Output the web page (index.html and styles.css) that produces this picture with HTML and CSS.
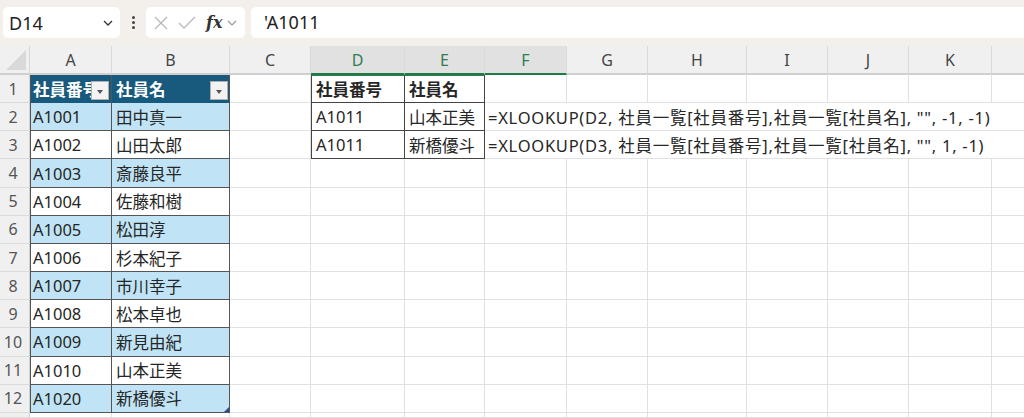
FILE: index.html
```html
<!DOCTYPE html>
<html lang="ja">
<head>
<meta charset="utf-8">
<link rel="stylesheet" href="styles.css">
</head>
<body>
<div class="topbar">
  <div class="namebox">
    <span class="nb-text">D14</span>
    <svg class="chev" width="10" height="6" viewBox="0 0 10 6"><path d="M1 1 L5 5 L9 1" fill="none" stroke="#333" stroke-width="1.3"/></svg>
  </div>
  <div class="dots"><span></span><span></span><span></span></div>
  <div class="fxbox">
    <svg width="16" height="16" viewBox="0 0 16 16"><path d="M2 2 L14 14 M14 2 L2 14" stroke="#b8b8b8" stroke-width="1.3" fill="none"/></svg>
    <svg width="18" height="14" viewBox="0 0 18 14"><path d="M1 7 L6 12 L17 1" stroke="#b8b8b8" stroke-width="1.3" fill="none"/></svg>
    <span class="fx">fx</span>
    <svg width="10" height="6" viewBox="0 0 10 6"><path d="M1 1 L5 5 L9 1" fill="none" stroke="#999" stroke-width="1.2"/></svg>
  </div>
  <div class="formula">'A1011</div>
</div>
<div class="sheet">
  <div class="corner"><div class="tri"></div></div>
  <div class="ch">A</div><div class="ch">B</div><div class="ch">C</div>
  <div class="ch sel">D</div><div class="ch sel">E</div><div class="ch sel">F</div>
  <div class="ch">G</div><div class="ch">H</div><div class="ch">I</div><div class="ch">J</div><div class="ch">K</div><div class="ch last"></div>

  <div class="rh">1</div>
  <div class="c ta th">社員番号<span class="flt"></span></div>
  <div class="c tb th">社員名<span class="flt"></span></div>
  <div class="c"></div>
  <div class="c dd dtop b">社員番号</div>
  <div class="c de dtop b">社員名</div>
  <div class="c"></div><div class="c"></div><div class="c"></div><div class="c"></div><div class="c"></div><div class="c"></div><div class="c last"></div>

  <div class="rh">2</div>
  <div class="c ta band">A1001</div>
  <div class="c tb band">田中真一</div>
  <div class="c"></div>
  <div class="c dd">A1011</div>
  <div class="c de">山本正美</div>
  <div class="c span">=XLOOKUP(D2, 社員一覧[社員番号],社員一覧[社員名], "", -1, -1)</div>
  <div class="c last"></div>

  <div class="rh">3</div>
  <div class="c ta">A1002</div>
  <div class="c tb">山田太郎</div>
  <div class="c"></div>
  <div class="c dd">A1011</div>
  <div class="c de">新橋優斗</div>
  <div class="c span">=XLOOKUP(D3, 社員一覧[社員番号],社員一覧[社員名], "", 1, -1)</div>
  <div class="c last"></div>

  <div class="rh">4</div><div class="c ta band">A1003</div><div class="c tb band">斎藤良平</div>
  <div class="c"></div><div class="c"></div><div class="c"></div><div class="c"></div><div class="c"></div><div class="c"></div><div class="c"></div><div class="c"></div><div class="c"></div><div class="c last"></div>
  <div class="rh">5</div><div class="c ta">A1004</div><div class="c tb">佐藤和樹</div>
  <div class="c"></div><div class="c"></div><div class="c"></div><div class="c"></div><div class="c"></div><div class="c"></div><div class="c"></div><div class="c"></div><div class="c"></div><div class="c last"></div>
  <div class="rh">6</div><div class="c ta band">A1005</div><div class="c tb band">松田淳</div>
  <div class="c"></div><div class="c"></div><div class="c"></div><div class="c"></div><div class="c"></div><div class="c"></div><div class="c"></div><div class="c"></div><div class="c"></div><div class="c last"></div>
  <div class="rh">7</div><div class="c ta">A1006</div><div class="c tb">杉本紀子</div>
  <div class="c"></div><div class="c"></div><div class="c"></div><div class="c"></div><div class="c"></div><div class="c"></div><div class="c"></div><div class="c"></div><div class="c"></div><div class="c last"></div>
  <div class="rh">8</div><div class="c ta band">A1007</div><div class="c tb band">市川幸子</div>
  <div class="c"></div><div class="c"></div><div class="c"></div><div class="c"></div><div class="c"></div><div class="c"></div><div class="c"></div><div class="c"></div><div class="c"></div><div class="c last"></div>
  <div class="rh">9</div><div class="c ta">A1008</div><div class="c tb">松本卓也</div>
  <div class="c"></div><div class="c"></div><div class="c"></div><div class="c"></div><div class="c"></div><div class="c"></div><div class="c"></div><div class="c"></div><div class="c"></div><div class="c last"></div>
  <div class="rh">10</div><div class="c ta band">A1009</div><div class="c tb band">新見由紀</div>
  <div class="c"></div><div class="c"></div><div class="c"></div><div class="c"></div><div class="c"></div><div class="c"></div><div class="c"></div><div class="c"></div><div class="c"></div><div class="c last"></div>
  <div class="rh">11</div><div class="c ta">A1010</div><div class="c tb">山本正美</div>
  <div class="c"></div><div class="c"></div><div class="c"></div><div class="c"></div><div class="c"></div><div class="c"></div><div class="c"></div><div class="c"></div><div class="c"></div><div class="c last"></div>
  <div class="rh">12</div><div class="c ta band">A1020</div><div class="c tb band tend">新橋優斗<span class="handle"></span></div>
  <div class="c"></div><div class="c"></div><div class="c"></div><div class="c"></div><div class="c"></div><div class="c"></div><div class="c"></div><div class="c"></div><div class="c"></div><div class="c last"></div>
  <div class="rh"></div><div class="c"></div><div class="c"></div>
  <div class="c"></div><div class="c"></div><div class="c"></div><div class="c"></div><div class="c"></div><div class="c"></div><div class="c"></div><div class="c"></div><div class="c"></div><div class="c last"></div>
</div>
</body>
</html>
```
FILE: styles.css
```css
* { box-sizing: border-box; }
html, body { margin: 0; padding: 0; }
body {
  width: 1024px;
  height: 418px;
  overflow: hidden;
  background: #ffffff;
  font-family: "Noto Sans", "Noto Sans CJK JP", sans-serif;
  color: #222;
}
.topbar {
  height: 46px;
  background: #f3f0ec;
  display: flex;
  align-items: flex-start;
  padding: 7px 0 0 3px;
  gap: 0;
}
.namebox {
  width: 117px;
  height: 31px;
  background: #fff;
  border-radius: 5px;
  display: flex;
  align-items: center;
  justify-content: space-between;
  padding: 0 7px 0 6px;
}
.nb-text { font-size: 18px; color: #222; }
.dots {
  width: 26px;
  height: 31px;
  display: flex;
  flex-direction: column;
  align-items: center;
  justify-content: center;
  gap: 2px;
}
.dots span { width: 3px; height: 3px; border-radius: 50%; background: #444; }
.fxbox {
  width: 99px;
  height: 31px;
  background: #fff;
  border-radius: 5px;
  display: flex;
  align-items: center;
  padding: 0 0 0 7px;
  gap: 10px;
}
.fxbox svg:nth-child(2) { margin-left: -1px; }
.fx {
  font-family: "DejaVu Serif", "Liberation Serif", serif;
  font-style: italic;
  font-weight: bold;
  font-size: 16px;
  color: #333;
  margin-right: -5px;
}
.formula {
  flex: 1;
  margin-left: 6px;
  height: 31px;
  background: #fff;
  border-radius: 5px 0 0 5px;
  padding-left: 13px;
  font-size: 18px;
  line-height: 31px;
  color: #222;
}
.sheet {
  display: grid;
  grid-template-columns: 30px 82px 118px 81px 94px 80px 82px 81px 99px 81px 81px 83px 1fr;
  grid-template-rows: 29px repeat(12, 28.17px) 1fr;
  height: 372px;
  font-size: 16px;
}
.corner {
  background: #f0f0f0;
  border-bottom: 2px solid #cfcfcf;
  border-right: 1px solid #d8d8d8;
  position: relative;
}
.tri {
  position: absolute;
  right: 3px;
  bottom: 3px;
  width: 0; height: 0;
  border-left: 20px solid transparent;
  border-bottom: 20px solid #d9d9d9;
}
.ch {
  background: #f0f0f0;
  border-right: 1px solid #dadada;
  border-bottom: 2px solid #cfcfcf;
  display: flex;
  align-items: center;
  justify-content: center;
  font-size: 16px;
  color: #444;
  padding-top: 1px;
}
.ch.sel { background: #e1e1e1; color: #2e7d52; border-bottom-color: #1f7a46; }
.ch.last { border-right: none; }
.rh {
  background: #f0f0f0;
  border-bottom: 1px solid #dadada;
  border-right: 1px solid #d0d0d0;
  display: flex;
  align-items: center;
  justify-content: center;
  font-size: 16px;
  color: #555;
  padding-right: 3px;
}
.c {
  border-right: 1px solid #e1e1e1;
  border-bottom: 1px solid #e1e1e1;
  display: flex;
  align-items: center;
  padding: 0 0 0 4px;
  white-space: nowrap;
  overflow: hidden;
  font-size: 16.5px;
  color: #262626;
  position: relative;
}
.c.last { border-right: none; }
.ta { border-left: 1px solid #555; border-right: 1px solid #555; border-bottom: 1px solid #555; padding-left: 2px; }
.tb { border-right: 1px solid #555; border-bottom: 1px solid #555; padding-left: 4px; }
.band { background: #c0e4f5; }
.th { background: #175a7e; color: #fff; font-weight: bold; }
.th.ta { border-bottom-color: #175a7e; }
.th.tb { border-bottom-color: #175a7e; }
.flt {
  position: absolute;
  right: 1px;
  top: 6px;
  width: 18px;
  height: 19px;
  background: #f3f3f3;
  border: 1px solid #b0b0b0;
}
.flt::after {
  content: "";
  position: absolute;
  left: 5px;
  top: 8px;
  border-left: 3.5px solid transparent;
  border-right: 3.5px solid transparent;
  border-top: 4px solid #555;
}
.ta .flt { right: 2px; }
.handle {
  position: absolute;
  right: 0;
  bottom: 0;
  border-left: 5px solid transparent;
  border-bottom: 5px solid #2b4a9a;
}
.dd { border-left: 1px solid #444; border-right: 1px solid #444; border-bottom: 1px solid #444; }
.de { border-right: 1px solid #444; border-bottom: 1px solid #444; }
.dtop { border-top: 1px solid #2e7d52; }
.b { font-weight: bold; }
.span { grid-column: span 6; border-right: none; padding-left: 3px; letter-spacing: 0.74px; }
```
